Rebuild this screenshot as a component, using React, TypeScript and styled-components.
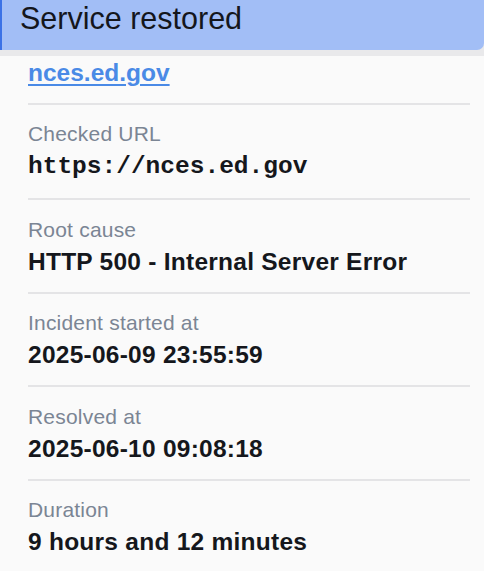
import React from "react";
import styled, { createGlobalStyle } from "styled-components";

const Global = createGlobalStyle`
  html, body { margin: 0; padding: 0; background: #fafafa; }
  body { font-family: "Liberation Sans", Arial, sans-serif; }
`;

const Page = styled.div`
  width: 484px;
  height: 571px;
  overflow: hidden;
  background: #fafafa;
`;

const HeaderWrap = styled.div`
  background: #e9e9eb;
  padding-bottom: 6px;
`;

const Header = styled.div`
  height: 50px;
  box-sizing: border-box;
  padding: 1px 0 0 18px;
  background: #a2bef6;
  border-left: 2px solid #3b72e6;
  border-bottom-right-radius: 7px;
  font-size: 30.5px;
  color: #14161c;
`;

const Content = styled.div`
  padding: 0 14px 0 28px;
`;

const Row = styled.div<{ $first?: boolean; $last?: boolean }>`
  padding: ${(p) => (p.$first ? "3px 0 15.5px" : "17.5px 0 16px")};
  border-bottom: ${(p) => (p.$last ? "none" : "2px solid #e4e4e6")};
  display: flex;
  flex-direction: column;
  gap: 6px;
`;

const Label = styled.div`
  font-size: 21px;
  line-height: 24px;
  letter-spacing: 0.2px;
  color: #7b8594;
`;

const Value = styled.div<{ $mono?: boolean }>`
  font-family: ${(p) =>
    p.$mono ? `"Liberation Mono", "Courier New", monospace` : `"Liberation Sans", Arial, sans-serif`};
  font-size: 24.5px;
  line-height: ${(p) => (p.$mono ? "30px" : "28px")};
  letter-spacing: ${(p) => (p.$mono ? "0" : "0.25px")};
  font-weight: 700;
  color: #15171c;
`;

const Link = styled.a`
  font-size: 24.5px;
  line-height: 28px;
  font-weight: 700;
  color: #4a8ae6;
  text-decoration: underline;
  text-decoration-thickness: 2px;
  text-underline-offset: 3px;
`;

const items: { label: string; value: string; mono?: boolean }[] = [
  { label: "Checked URL", value: "https://nces.ed.gov", mono: true },
  { label: "Root cause", value: "HTTP 500 - Internal Server Error" },
  { label: "Incident started at", value: "2025-06-09 23:55:59" },
  { label: "Resolved at", value: "2025-06-10 09:08:18" },
  { label: "Duration", value: "9 hours and 12 minutes" },
];

export default function App() {
  return (
    <Page>
      <Global />
      <HeaderWrap>
        <Header>Service restored</Header>
      </HeaderWrap>
      <Content>
        <Row $first>
          <Link href="#">nces.ed.gov</Link>
        </Row>
        {items.map((it, i) => (
          <Row key={it.label} $last={i === items.length - 1}>
            <Label>{it.label}</Label>
            <Value $mono={it.mono}>{it.value}</Value>
          </Row>
        ))}
      </Content>
    </Page>
  );
}
